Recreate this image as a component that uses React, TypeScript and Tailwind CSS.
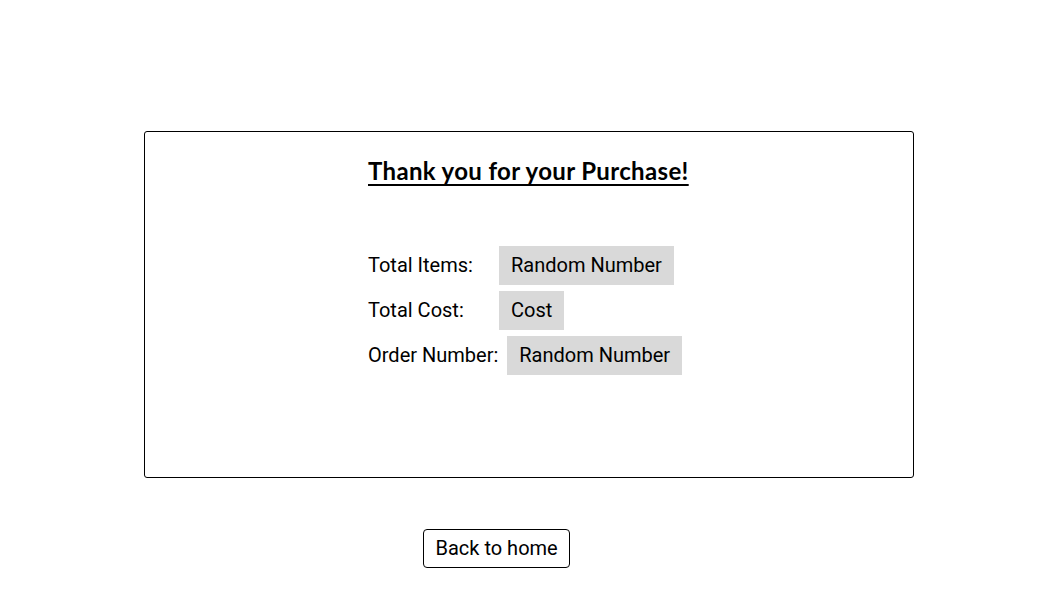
export default function App() {
  const rows = [
    { label: 'Total Items:', value: 'Random Number' },
    { label: 'Total Cost:', value: 'Cost' },
    { label: 'Order Number:', value: 'Random Number' },
  ];

  return (
    <div className="min-h-[610px] w-[1057px] bg-white pt-[131px] text-black font-['Roboto',sans-serif]">
      {/* Summary card */}
      <div className="ml-[144px] flex h-[347px] w-[770px] rounded-[3px] border border-black pl-[223px]">
        <div className="w-[320px] pt-[24px]">
          <h1 className="whitespace-nowrap text-center text-[24px] font-bold leading-[30px] tracking-[0.35px] underline underline-offset-[4px] decoration-[2px] font-['Lato',sans-serif]">
            Thank you for your Purchase!
          </h1>
          <div className="mt-[60px] flex flex-col gap-[6px]">
            {rows.map((row) => (
              <div key={row.label} className="flex items-center">
                <span className="min-w-[122px] text-[20px] leading-[23px]">{row.label}</span>
                <span className="ml-[9px] bg-[#d9d9d9] px-[12px] py-[8px] text-[20px] leading-[23px]">
                  {row.value}
                </span>
              </div>
            ))}
          </div>
        </div>
      </div>

      <div className="mt-[51px] pl-[423px]">
        <button className="rounded-[4px] border border-black bg-white px-[11.5px] py-[7px] text-[20px] leading-[23px]">
          Back to home
        </button>
      </div>
    </div>
  );
}
